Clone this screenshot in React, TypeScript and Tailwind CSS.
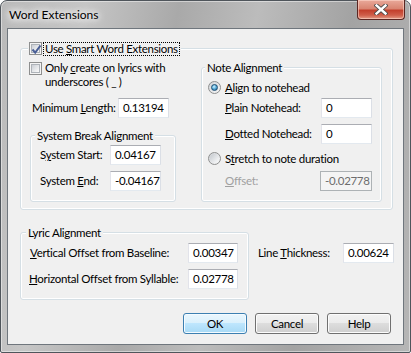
import React from "react";

type FieldProps = { value: string; w: string; disabled?: boolean };

function Field({ value, w, disabled }: FieldProps) {
  return (
    <div
      className={
        "h-[20px] shrink-0 overflow-hidden whitespace-nowrap pl-[4px] leading-[18px] border " +
        w +
        (disabled
          ? " border-[#adb2b5] bg-[#f4f4f4] text-[#6d6d6d]"
          : " border-t-[#abadb3] border-l-[#e2e3ea] border-r-[#dbdfe6] border-b-[#e3e9ef] bg-white")
      }
    >
      {value}
    </div>
  );
}

function Checkbox({ checked }: { checked?: boolean }) {
  return (
    <span className="relative block w-[13px] h-[13px] shrink-0 border border-[#8e8f8f] bg-[#f4f4f4] p-[1px]">
      <span className="block w-full h-full border border-[#aeb3b9] bg-[linear-gradient(135deg,#cbcfd5_0%,#e4e6e9_50%,#fafafa_100%)]" />
      {checked && (
        <svg className="absolute left-[1px] top-[1px]" width="11" height="11" viewBox="0 0 11 11">
          <path d="M1.5 5.5 L4.2 8.6 L9.5 1.5" fill="none" stroke="#4a5f97" strokeWidth="2" />
        </svg>
      )}
    </span>
  );
}

function Radio({ checked }: { checked?: boolean }) {
  return (
    <span className="flex items-center justify-center w-[13px] h-[13px] shrink-0 rounded-full border border-[#8e8f8f] bg-[linear-gradient(135deg,#d0d3d7_0%,#f7f7f7_100%)]">
      {checked ? (
        <span className="block w-[7px] h-[7px] rounded-full border border-[#1d4e73] bg-[radial-gradient(circle_at_40%_35%,#d6f3ff_0%,#5db1dc_45%,#1c5a8a_100%)]" />
      ) : (
        <span className="block w-[9px] h-[9px] rounded-full bg-[linear-gradient(135deg,#c4c8cd_0%,#eceef0_70%,#fbfbfb_100%)]" />
      )}
    </span>
  );
}

function Legend({ children, ml }: { children: React.ReactNode; ml: string }) {
  return (
    <div className={"-mt-[8px] h-[15px] leading-[15px] w-fit whitespace-nowrap bg-[#f0f0f0] px-[2px] " + ml}>
      {children}
    </div>
  );
}

function Button({ label, primary }: { label: string; primary?: boolean }) {
  return (
    <div
      className={
        "w-[64px] h-[21px] rounded-[3px] border flex items-center justify-center leading-none " +
        (primary
          ? "border-[#3c7fb1] bg-[linear-gradient(#eaf6fd_0%,#d9f0fc_50%,#bee6fd_50%,#a7d9f5_100%)] shadow-[inset_0_0_0_1px_#f4fbff]"
          : "border-[#707070] bg-[linear-gradient(#f2f2f2_0%,#ebebeb_50%,#dddddd_50%,#cfcfcf_100%)] shadow-[inset_0_0_0_1px_#fcfcfc]")
      }
    >
      {label}
    </div>
  );
}

const group = "border border-[#d5dfe5] rounded-[3px] shadow-[inset_0_0_0_1px_#ffffff]";
const label = "whitespace-nowrap shrink-0";

export default function App() {
  return (
    <div className="w-[411px] h-[353px] font-['Lato',sans-serif] text-[11.5px] tracking-[-0.3px] text-black">
      <div className="w-[411px] h-[353px] flex flex-col rounded-t-[7px] rounded-b-[2px] border border-[#4f555b] bg-[linear-gradient(100deg,#b9b9b9_0%,#c6c6c6_18%,#a9a9a9_38%,#bcbcbc_55%,#a3a3a3_75%,#b6b6b6_100%)] shadow-[inset_0_0_0_1px_rgba(255,255,255,0.45)]">
        {/* title bar */}
        <div className="h-[27px] flex items-start shrink-0">
          <div className="flex-1 h-full flex items-center pl-[8px]">
            <span className="text-[12px] tracking-normal [text-shadow:0_0_6px_#fff,0_0_8px_#fff,0_0_12px_#fff]">
              Word Extensions
            </span>
          </div>
          <div className="-mt-[1px] mr-[5px] w-[48px] h-[20px] rounded-b-[4px] border border-t-0 border-[#5b2622] bg-[linear-gradient(#e9a99a_0%,#d98572_45%,#c3402d_55%,#cf5e4a_80%,#e49c87_100%)] shadow-[inset_0_0_0_1px_rgba(255,220,210,0.55)] flex items-center justify-center">
            <svg width="14" height="11" viewBox="0 0 14 11">
              <path d="M2.5 1.5 L11.5 9.5 M11.5 1.5 L2.5 9.5" stroke="#4a4a4a" strokeWidth="4.2" strokeLinecap="square" />
              <path d="M2.5 1.5 L11.5 9.5 M11.5 1.5 L2.5 9.5" stroke="#ffffff" strokeWidth="2.4" strokeLinecap="square" />
            </svg>
          </div>
        </div>

        {/* client */}
        <div className="ml-[6px] w-[397px] h-[317px] shrink-0 border border-[#6f767d] bg-[#f0f0f0] flex flex-col">
          {/* smart word extensions group */}
          <div className={"ml-[12px] mt-[19px] w-[373px] h-[162px] flex flex-col " + group}>
            <div className="-mt-[8px] h-[15px] ml-[7px] px-[1px] w-fit bg-[#f0f0f0] flex items-center gap-[1px]">
              <Checkbox checked />
              <span className="h-[14px] leading-[12px] px-[1px] whitespace-nowrap border border-dotted border-black">
                Use <u>S</u>mart Word Extensions
              </span>
            </div>
            <div className="flex">
              <div className="w-[180px] flex flex-col">
                <div className="mt-[5px] flex items-start">
                  <div className="ml-[8px] mt-[1px]">
                    <Checkbox />
                  </div>
                  <div className="ml-[3px] w-[140px] leading-[14px]">
                    Only <u>c</u>reate on lyrics with underscores ( _ )
                  </div>
                </div>
                <div className="mt-[9px] ml-[11px] flex items-center">
                  <span className={"w-[86px] " + label}>
                    Minimum <u>L</u>ength:
                  </span>
                  <Field value="0.13194" w="w-[51px]" />
                </div>
                <div className={"mt-[17px] ml-[9px] w-[146px] h-[67px] flex flex-col " + group}>
                  <Legend ml="ml-[4px]">System Break Alignment</Legend>
                  <div className="mt-[2px] ml-[9px] flex items-center">
                    <span className={"w-[70px] " + label}>
                      S<u>y</u>stem Start:
                    </span>
                    <Field value="0.04167" w="w-[51px]" />
                  </div>
                  <div className="mt-[6px] ml-[9px] flex items-center">
                    <span className={"w-[70px] " + label}>
                      System <u>E</u>nd:
                    </span>
                    <Field value="-0.04167" w="w-[51px]" />
                  </div>
                </div>
              </div>

              {/* note alignment */}
              <div className={"mt-[11px] w-[181px] h-[135px] flex flex-col " + group}>
                <Legend ml="ml-[3px]">Note Alignment</Legend>
                <div className="mt-[5px] ml-[6px] h-[15px] flex items-center gap-[4px]">
                  <Radio checked />
                  <span className={label}>
                    <u>A</u>lign to notehead
                  </span>
                </div>
                <div className="mt-[3px] ml-[23px] flex items-center">
                  <span className={"w-[96px] " + label}>
                    <u>P</u>lain Notehead:
                  </span>
                  <Field value="0" w="w-[51px]" />
                </div>
                <div className="mt-[6px] ml-[23px] flex items-center">
                  <span className={"w-[96px] " + label}>
                    <u>D</u>otted Notehead:
                  </span>
                  <Field value="0" w="w-[51px]" />
                </div>
                <div className="mt-[7px] ml-[6px] h-[15px] flex items-center gap-[4px]">
                  <Radio />
                  <span className={label}>
                    S<u>t</u>retch to note duration
                  </span>
                </div>
                <div className="mt-[5px] ml-[23px] flex items-center">
                  <span className={"w-[95px] text-[#a0a0a0] " + label}>
                    <u>O</u>ffset:
                  </span>
                  <Field value="-0.02778" w="w-[52px]" disabled />
                </div>
              </div>
            </div>
          </div>

          {/* lyric alignment */}
          <div className="mt-[22px] ml-[12px] flex items-start">
            <div className={"w-[229px] h-[68px] flex flex-col " + group}>
              <Legend ml="ml-[5px]">Lyric Alignment</Legend>
              <div className="mt-[3px] ml-[9px] flex items-center">
                <span className={"w-[158px] " + label}>
                  <u>V</u>ertical Offset from Baseline:
                </span>
                <Field value="0.00347" w="w-[50px]" />
              </div>
              <div className="mt-[6px] ml-[8px] flex items-center">
                <span className={"w-[159px] " + label}>
                  <u>H</u>orizontal Offset from Syllable:
                </span>
                <Field value="0.02778" w="w-[50px]" />
              </div>
            </div>
            <div className="ml-[9px] mt-[11px] flex items-center">
              <span className={"w-[85px] " + label}>
                Line <u>T</u>hickness:
              </span>
              <Field value="0.00624" w="w-[51px]" />
            </div>
          </div>

          {/* buttons */}
          <div className="mt-[13px] pl-[175px] flex gap-[8px]">
            <Button label="OK" primary />
            <Button label="Cancel" />
            <Button label="Help" />
          </div>
        </div>
      </div>
    </div>
  );
}
